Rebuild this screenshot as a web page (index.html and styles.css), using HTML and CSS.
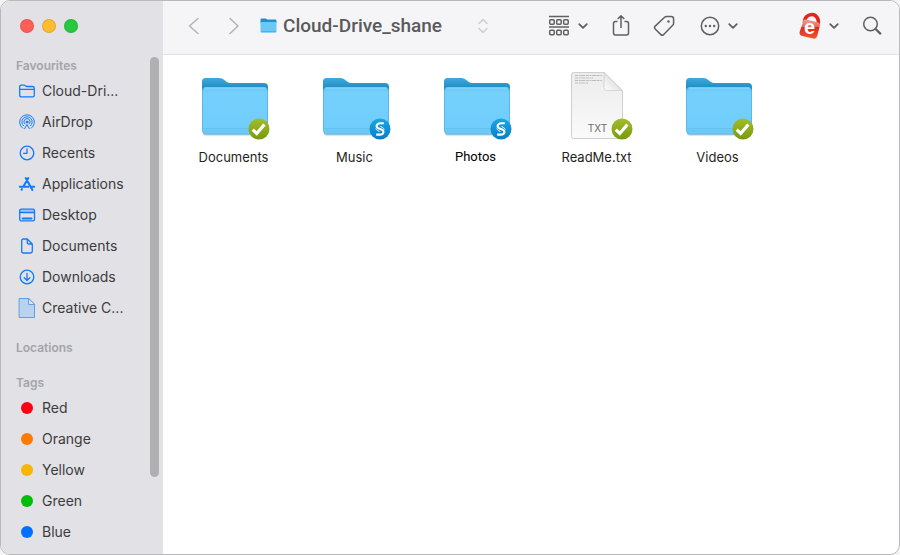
FILE: index.html
```html
<!DOCTYPE html>
<html lang="en">
<head>
<meta charset="utf-8">
<title>Cloud-Drive_shane</title>
<link rel="stylesheet" href="styles.css">
</head>
<body>
<svg class="defs" width="0" height="0" aria-hidden="true">
  <defs>
    <linearGradient id="back" x1="0" y1="0" x2="0" y2="1"><stop offset="0" stop-color="#3fa9db"/><stop offset=".5" stop-color="#2391c8"/><stop offset="1" stop-color="#2391c8"/></linearGradient>
    <linearGradient id="front" x1="0" y1="0" x2="0" y2="1"><stop offset="0" stop-color="#6ac9f7"/><stop offset=".12" stop-color="#74cffb"/><stop offset="1" stop-color="#70cdfb"/></linearGradient>
    <linearGradient id="paper" x1="0" y1="0" x2="0" y2="1"><stop offset="0" stop-color="#ececec"/><stop offset="1" stop-color="#fafafa"/></linearGradient>
    <linearGradient id="curl" x1="0" y1="1" x2=".6" y2=".4"><stop offset="0" stop-color="#fff"/><stop offset="1" stop-color="#dedede"/></linearGradient>
    <linearGradient id="ok" x1="0" y1="0" x2="0" y2="1"><stop offset="0" stop-color="#a3bd2c"/><stop offset="1" stop-color="#789a0a"/></linearGradient>
    <linearGradient id="sync" x1="0" y1="0" x2="0" y2="1"><stop offset="0" stop-color="#1ba5e6"/><stop offset="1" stop-color="#057fc8"/></linearGradient>
    <linearGradient id="lock" x1="0" y1="0" x2="0" y2="1"><stop offset="0" stop-color="#f3a196"/><stop offset=".38" stop-color="#e8675a"/><stop offset=".42" stop-color="#de2a1c"/><stop offset="1" stop-color="#f0552f"/></linearGradient>
    <symbol id="folder" viewBox="0 0 72 72">
      <path d="M5 62v1.500q0 2 3 2h58q3 0 3-2V62z" fill="#a7b4bc" opacity=".7"/>
      <path d="M4 20v-8.500Q4 8 7.500 8h14q2.500 0 4.500 1.700l2.500 2q1.700 1.300 4 1.300H66q4 0 4 4v8H4z" fill="url(#back)"/>
      <path d="M4.500 21q0-3.500 3.500-3.500h58q3.500 0 3.500 3.500v39.500q0 3.500-3.500 3.500H8q-3.500 0-3.500-3.500z" fill="url(#front)" stroke="#5cb8e6" stroke-width="1"/>
      <path d="M5.500 58.500h63M5.500 61h63" stroke="#65c1ee" stroke-width="1"/>
      <path d="M6.500 18h61" stroke="#93dafc" stroke-width="1"/>
    </symbol>
    <symbol id="badge-ok" viewBox="0 0 22 22">
      <circle cx="11" cy="11" r="10.500" fill="url(#ok)"/>
      <path d="M4.700 11.700l4 3.800 7.700-9" fill="none" stroke="#fff" stroke-width="3.200"/>
    </symbol>
    <symbol id="badge-sync" viewBox="0 0 22 22">
      <circle cx="11" cy="11" r="10.500" fill="url(#sync)"/>
      <path d="M14.800 5.300h-3.300c-2.500 0-3.900 1.200-3.900 2.900 0 3.400 6.800 2.300 6.800 5.500 0 1.700-1.500 2.900-3.900 2.900H7.200" fill="none" stroke="#fff" stroke-width="2.100"/>
      <path d="M11.300 8c.3 1 3.300 1.300 4 3.500M10.700 14c-.3-1-3.300-1.300-4-3.500" fill="none" stroke="#fff" stroke-width=".9"/>
    </symbol>
    <symbol id="down" viewBox="0 0 12 12"><path d="M2.200 4.200L6 7.800l3.800-3.600" fill="none" stroke="#606062" stroke-width="1.800" stroke-linecap="round" stroke-linejoin="round"/></symbol>
  </defs>
</svg>

<div class="window">
  <aside class="sidebar">
    <div class="lights">
      <button class="light close" aria-label="Close"></button>
      <button class="light minimise" aria-label="Minimise"></button>
      <button class="light zoom" aria-label="Zoom"></button>
    </div>
    <nav class="places">
      <h2 class="heading">Favourites</h2>
      <ul class="list">
        <li><a class="place" href="#"><svg class="icon" viewBox="0 0 18 18"><path d="M1.700 13.200V4.800q0-1.700 1.700-1.700h2.500q.8 0 1.300.5l.5.400q.5.500 1.300.5h5.600q1.700 0 1.700 1.700v7q0 1.700-1.700 1.700H3.400q-1.700 0-1.700-1.700zM1.700 7.300h14.600"/></svg><span class="name">Cloud-Dri...</span></a></li>
        <li><a class="place" href="#"><svg class="icon thin" viewBox="0 0 18 18"><path d="M4.700 15.200a7.400 7.400 0 1 1 8.600 0M5.600 12.900a5.200 5.200 0 1 1 6.800 0M6.900 11a3.100 3.100 0 1 1 4.200 0"/><circle cx="9" cy="9" r="1" class="solid"/><path d="M6.700 15.700L9 11.500l2.300 4.200"/></svg><span class="name">AirDrop</span></a></li>
        <li><a class="place" href="#"><svg class="icon" viewBox="0 0 18 18"><circle cx="9" cy="9" r="6.800"/><path d="M9 4.800v4.500H5.500"/></svg><span class="name">Recents</span></a></li>
        <li><a class="place" href="#"><svg class="icon bold" viewBox="0 0 18 18"><path d="M7.700 3l6.700 12M10.300 3L5.400 11.600M1.800 11.700h8.500M13 11.700h3.200M3.600 14.800l.4-.7"/></svg><span class="name">Applications</span></a></li>
        <li><a class="place" href="#"><svg class="icon" viewBox="0 0 18 18"><rect x="2" y="3.500" width="14" height="3" class="tint"/><rect x="1.700" y="3.100" width="14.800" height="11.800" rx="1.600"/><path d="M2 6.500h14"/><path d="M4.500 12.400h9" stroke-width="2"/></svg><span class="name">Desktop</span></a></li>
        <li><a class="place" href="#"><svg class="icon" viewBox="0 0 18 18"><path d="M3.700 14.300V3.700q0-1.700 1.700-1.700h3.900l5 5v7.300q0 1.700-1.700 1.700H5.400q-1.700 0-1.700-1.700zM9.300 2.300v3.200q0 1.500 1.500 1.500h3.200"/></svg><span class="name">Documents</span></a></li>
        <li><a class="place" href="#"><svg class="icon" viewBox="0 0 18 18"><circle cx="9" cy="9" r="6.800"/><path d="M9 5.400v7M6.200 9.800L9 12.500l2.800-2.700"/></svg><span class="name">Downloads</span></a></li>
        <li><a class="place" href="#"><svg class="icon file" viewBox="0 0 18 22"><path d="M1.500 1.500h9l6 6v13h-15z" fill="#b9d3ef"/><path d="M10.500 1.500v6h6z" fill="#d6e6f7"/></svg><span class="name">Creative C...</span></a></li>
      </ul>
      <h2 class="heading">Locations</h2>
      <h2 class="heading">Tags</h2>
      <ul class="list">
        <li><a class="place" href="#"><span class="dot red"></span><span class="name">Red</span></a></li>
        <li><a class="place" href="#"><span class="dot orange"></span><span class="name">Orange</span></a></li>
        <li><a class="place" href="#"><span class="dot yellow"></span><span class="name">Yellow</span></a></li>
        <li><a class="place" href="#"><span class="dot green"></span><span class="name">Green</span></a></li>
        <li><a class="place" href="#"><span class="dot blue"></span><span class="name">Blue</span></a></li>
      </ul>
    </nav>
    <div class="thumb"></div>
  </aside>

  <div class="content">
    <header class="toolbar">
      <div class="history">
        <button class="tool" aria-label="Back"><svg width="16" height="20" viewBox="0 0 16 20"><path d="M12 2.500L3.500 10 12 17.500" fill="none" stroke="#b3b3b6" stroke-width="1.500" stroke-linecap="round" stroke-linejoin="round"/></svg></button>
        <button class="tool" aria-label="Forward"><svg width="16" height="20" viewBox="0 0 16 20"><path d="M4 2.500l8 7.500-8 7.500" fill="none" stroke="#b3b3b6" stroke-width="1.500" stroke-linecap="round" stroke-linejoin="round"/></svg></button>
      </div>
      <div class="location">
        <svg width="17" height="16" viewBox="0 0 17 16"><path d="M.5 4V1.800Q.5.500 1.800.5h4l1.500 1h7.900q1.300 0 1.300 1.300V5H.5z" fill="#208fca"/><path d="M.5 4h16v9.500q0 1.300-1.300 1.300H1.800q-1.300 0-1.300-1.300z" fill="#6ac8f6"/><path d="M1 13.500h15" stroke="#55b0dc"/></svg>
        <h1 class="title">Cloud-Drive_shane</h1>
      </div>
      <button class="tool" aria-label="Show path"><svg width="12" height="20" viewBox="0 0 12 20"><path d="M2 7.500L6 3.500l4 4M2 12.500l4 4 4-4" fill="none" stroke="#cfcfd2" stroke-width="1.500" stroke-linecap="round" stroke-linejoin="round"/></svg></button>

      <div class="actions">
        <button class="tool pair" aria-label="Group items"><svg class="line" width="22" height="22" viewBox="0 0 22 22"><path d="M1 1.500h20M1 12h20"/><rect x="1.700" y="4.700" width="4.500" height="4.500" rx="1"/><rect x="8.700" y="4.700" width="4.500" height="4.500" rx="1"/><rect x="15.700" y="4.700" width="4.500" height="4.500" rx="1"/><rect x="1.700" y="15.300" width="4.500" height="4.500" rx="1"/><rect x="8.700" y="15.300" width="4.500" height="4.500" rx="1"/><rect x="15.700" y="15.300" width="4.500" height="4.500" rx="1"/></svg><svg width="12" height="12"><use href="#down"/></svg></button>
        <button class="tool" aria-label="Share"><svg class="line" width="20" height="24" viewBox="0 0 20 24"><path d="M6.500 7.500H4.500q-2 0-2 2V19q0 2 2 2h11q2 0 2-2V9.500q0-2-2-2h-2M10 14V2M6.700 5L10 1.700 13.300 5"/></svg></button>
        <button class="tool" aria-label="Edit tags"><svg class="line" width="22" height="22" viewBox="0 0 22 22"><path d="M13.600 1.500h4.500q2.500 0 2.500 2.500v4.300q0 1.200-.9 2l-9 9.300q-1.500 1.400-2.900 0L2.200 14q-1.400-1.400 0-2.900l9.400-8.900q.8-.7 2-.7z"/><circle cx="15.500" cy="6.500" r="1.200" fill="#606062" stroke="none"/></svg></button>
        <button class="tool pair more" aria-label="More actions"><svg class="line" width="20" height="20" viewBox="0 0 20 20"><circle cx="10" cy="10" r="8.700"/><g fill="#606062" stroke="none"><circle cx="5.800" cy="10" r="1.200"/><circle cx="10" cy="10" r="1.200"/><circle cx="14.200" cy="10" r="1.200"/></g></svg><svg width="12" height="12"><use href="#down"/></svg></button>
        <button class="tool pair vault" aria-label="Drive menu"><svg width="22" height="28" viewBox="0 0 22 28"><path d="M5.500 11C5.500 5 9 2.500 13 2.500s7.200 4 6.200 9.500" fill="none" stroke="#e3241d" stroke-width="3.600"/><path d="M4.500 8.600q.6-1.300 2.200-1l11.800 2.600q3 .7 2.400 3.500l-2.600 10q-.9 3.600-4.200 2.800l-10.800-2.400Q0 23.300.6 20z" fill="url(#lock)"/><text class="mark" x="10.500" y="22" text-anchor="middle">e</text></svg><svg width="12" height="12"><use href="#down"/></svg></button>
        <button class="tool" aria-label="Search"><svg class="line" width="20" height="20" viewBox="0 0 20 20"><circle cx="8.500" cy="8" r="6.800"/><path d="M13.600 13l4.700 4.600" stroke-width="2.200" stroke-linecap="round"/></svg></button>
      </div>
    </header>

    <main class="files">
      <a class="item" href="#"><svg class="art" viewBox="0 0 72 72"><use href="#folder"/><use href="#badge-ok" x="50" y="48" width="22" height="22"/></svg><span>Documents</span></a>
      <a class="item" href="#"><svg class="art" viewBox="0 0 72 72"><use href="#folder"/><use href="#badge-sync" x="50" y="48" width="22" height="22"/></svg><span>Music</span></a>
      <a class="item alt" href="#"><svg class="art" viewBox="0 0 72 72"><use href="#folder"/><use href="#badge-sync" x="50" y="48" width="22" height="22"/></svg><span>Photos</span></a>
      <a class="item" href="#"><svg class="art" viewBox="0 0 72 72"><path d="M10.500 4.500q0-2 2-2H43l18.500 18v46q0 2-2 2h-47q-2 0-2-2z" fill="url(#paper)" stroke="#cfcfcf"/><path d="M43 2.500l18.500 18H46q-3 0-3-3z" fill="url(#curl)" stroke="#cdcdcd" stroke-width=".8"/><path d="M14 5.500h27M14 8h18M14 10.500h27M14 13h13" stroke="#bdbdbd" stroke-width="1" stroke-dasharray="3 .7 2 .5 4 .6"/><text class="kind" x="36.500" y="62" text-anchor="middle">TXT</text><use href="#badge-ok" x="50" y="48" width="22" height="22"/></svg><span>ReadMe.txt</span></a>
      <a class="item" href="#"><svg class="art" viewBox="0 0 72 72"><use href="#folder"/><use href="#badge-ok" x="50" y="48" width="22" height="22"/></svg><span>Videos</span></a>
    </main>
  </div>
</div>
</body>
</html>
```
FILE: styles.css
```css
* { box-sizing: border-box; }

body {
  margin: 0;
  background: #f4f4f4;
  font-family: Inter, "Liberation Sans", sans-serif;
  color: #3c3c3e;
}

.defs { position: absolute; }

h1, h2, ul { margin: 0; padding: 0; }
ul { list-style: none; }
a { color: inherit; text-decoration: none; }

.window {
  display: flex;
  height: 100vh;
  overflow: hidden;
  border: 1px solid #b9b9bb;
  border-radius: 10px;
  background: #fff;
}

/* Sidebar */
.sidebar {
  position: relative;
  flex: 0 0 162px;
  overflow: hidden;
  background: #e2e1e5;
}

.lights {
  display: flex;
  gap: 8px;
  padding: 18px 19px 0;
}

.light {
  width: 14px;
  height: 14px;
  padding: 0;
  border: 1px solid rgba(0, 0, 0, 0.1);
  border-radius: 50%;
}

.close { background: #ff5f57; }
.minimise { background: #febc2e; }
.zoom { background: #28c840; }

.places { padding: 22px 24px 0 15px; }

.heading {
  height: 20px;
  font-size: 12px;
  font-weight: 600;
  line-height: 22px;
  color: #a5a4a8;
}

.list + .heading { margin-top: 14px; }
.heading + .heading { margin-top: 15px; }

.place {
  display: flex;
  align-items: center;
  gap: 6px;
  height: 31px;
  padding-left: 2px;
  font-size: 14px;
}

.name { white-space: nowrap; }

.icon {
  flex: none;
  width: 18px;
  height: 18px;
  fill: none;
  stroke: #127bfb;
  stroke-width: 1.3;
  stroke-linecap: round;
  stroke-linejoin: round;
}

.thin { stroke-width: 1; }
.bold { stroke-width: 2; }
.file { height: 22px; stroke: #5f9fe6; stroke-width: 1; }
.solid { fill: #127bfb; }
.tint { fill: #9fc5f3; stroke: none; }

.dot {
  width: 12px;
  height: 12px;
  margin: 0 3px;
  border-radius: 50%;
}

.red { background: #ff0010; }
.orange { background: #ff7a00; }
.yellow { background: #f7b500; }
.green { background: #00bd0c; }
.blue { background: #0070ff; }

.thumb {
  position: absolute;
  top: 56px;
  right: 4px;
  width: 9px;
  height: 420px;
  border-radius: 5px;
  background: #b0afb2;
}

/* Main area */
.content { flex: 1; min-width: 0; }

.toolbar {
  display: flex;
  align-items: center;
  height: 54px;
  padding: 0 17px 4px 23px;
  border-bottom: 1px solid #e2e2e5;
  background: #f5f5f8;
}

.tool {
  display: flex;
  align-items: center;
  padding: 0;
  border: 0;
  background: none;
}

.pair { gap: 7px; }

.line {
  fill: none;
  stroke: #606062;
  stroke-width: 1.5;
  stroke-linejoin: round;
}

.history { display: flex; gap: 24px; }

.location {
  display: flex;
  align-items: center;
  gap: 6px;
  margin: 0 35px 0 18px;
}

.title {
  font-family: Roboto, "Liberation Sans", sans-serif;
  font-size: 19px;
  font-weight: 500;
  line-height: 24px;
  color: #5a5a5c;
}

.actions {
  display: flex;
  align-items: center;
  gap: 22px;
  margin-left: auto;
}

.more { margin-left: 3px; }
.vault { margin-left: 38px; }

.mark {
  font: 700 20px "Liberation Sans", sans-serif;
  fill: #fff;
}

.files {
  display: grid;
  grid-template-columns: repeat(auto-fill, 121px);
  padding: 15px 10px;
}

.item {
  display: flex;
  flex-direction: column;
  align-items: center;
  gap: 6px;
  font-size: 13px;
  line-height: 18px;
  color: #1f1f20;
}

.alt { font-family: Roboto, "Liberation Sans", sans-serif; color: #000; }

.art { width: 72px; height: 72px; }

.kind {
  font: 10px Inter, sans-serif;
  fill: #6b6b6b;
}
```
